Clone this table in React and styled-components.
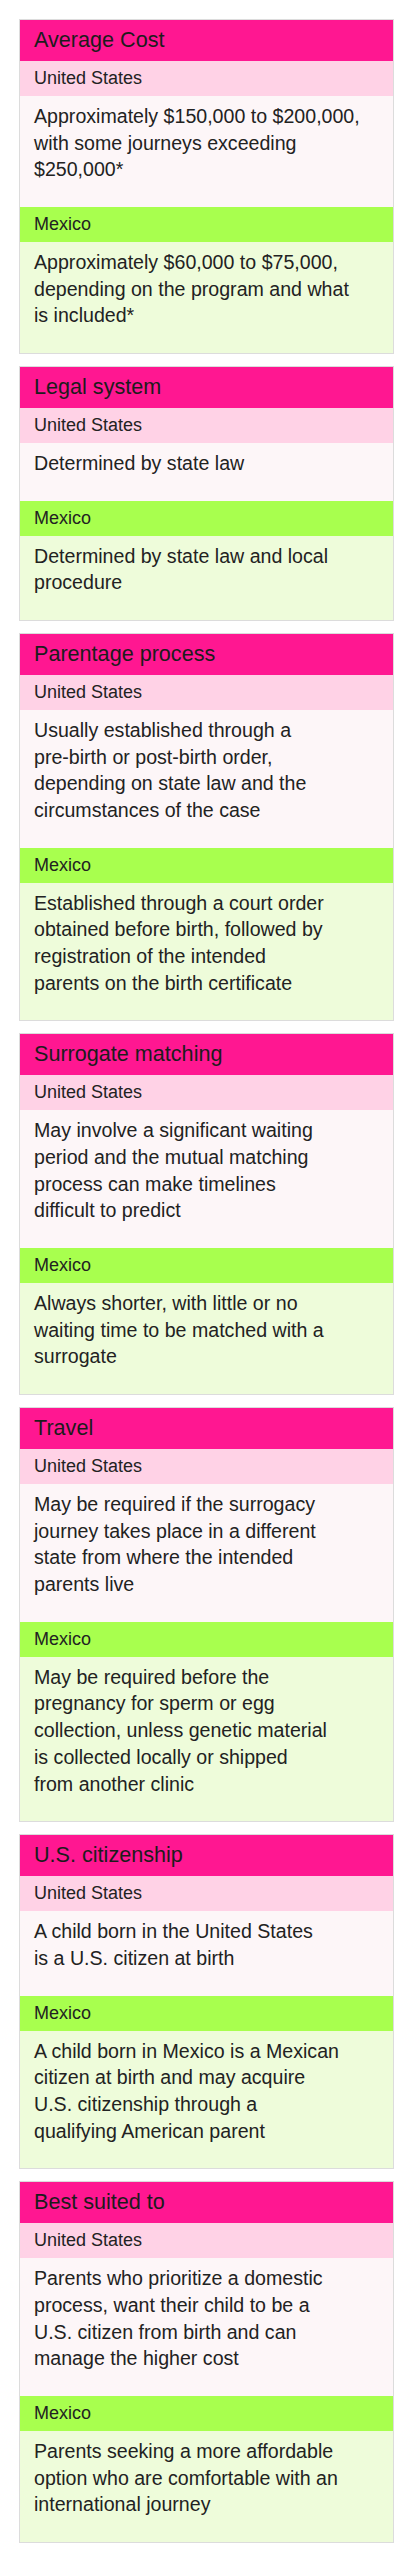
import React from "react";
import styled, { createGlobalStyle } from "styled-components";

const rows = [
  {
    title: "Average Cost",
    us: "Approximately $150,000 to $200,000,\nwith some journeys exceeding\n$250,000*",
    mx: "Approximately $60,000 to $75,000,\ndepending on the program and what\nis included*",
  },
  {
    title: "Legal system",
    us: "Determined by state law",
    mx: "Determined by state law and local\nprocedure",
  },
  {
    title: "Parentage process",
    us: "Usually established through a\npre-birth or post-birth order,\ndepending on state law and the\ncircumstances of the case",
    mx: "Established through a court order\nobtained before birth, followed by\nregistration of the intended\nparents on the birth certificate",
  },
  {
    title: "Surrogate matching",
    us: "May involve a significant waiting\nperiod and the mutual matching\nprocess can make timelines\ndifficult to predict",
    mx: "Always shorter, with little or no\nwaiting time to be matched with a\nsurrogate",
  },
  {
    title: "Travel",
    us: "May be required if the surrogacy\njourney takes place in a different\nstate from where the intended\nparents live",
    mx: "May be required before the\npregnancy for sperm or egg\ncollection, unless genetic material\nis collected locally or shipped\nfrom another clinic",
  },
  {
    title: "U.S. citizenship",
    us: "A child born in the United States\nis a U.S. citizen at birth",
    mx: "A child born in Mexico is a Mexican\ncitizen at birth and may acquire\nU.S. citizenship through a\nqualifying American parent",
  },
  {
    title: "Best suited to",
    us: "Parents who prioritize a domestic\nprocess, want their child to be a\nU.S. citizen from birth and can\nmanage the higher cost",
    mx: "Parents seeking a more affordable\noption who are comfortable with an\ninternational journey",
  },
];

export default function App() {
  return (
    <>
      <GlobalStyle />
      <Page>
        {rows.map((row) => (
          <Card key={row.title}>
            <CardTitle>{row.title}</CardTitle>
            <Country $tone="us">United States</Country>
            <Detail $tone="us">{row.us}</Detail>
            <Country $tone="mx">Mexico</Country>
            <Detail $tone="mx">{row.mx}</Detail>
          </Card>
        ))}
      </Page>
    </>
  );
}

const GlobalStyle = createGlobalStyle`
  html, body {
    margin: 0;
    padding: 0;
    background: #ffffff;
  }
  body {
    font-family: "Liberation Sans", Arial, Helvetica, sans-serif;
    color: #222222;
  }
`;

const Page = styled.main`
  display: flex;
  flex-direction: column;
  gap: 12px;
  padding: 19px 19px 19px 19px;
`;

const Card = styled.section`
  display: flex;
  flex-direction: column;
  border: 1px solid #dcdcdc;
`;

const CardTitle = styled.h2`
  margin: 0;
  padding: 7px 14px 9px;
  background-color: #ff1791;
  color: #1c1c1c;
  font-size: 21.6px;
  font-weight: 400;
  line-height: 25px;
`;

const Country = styled.h3`
  margin: 0;
  padding: 7px 14px;
  background-color: ${(p) => (p.$tone === "us" ? "#ffd2e6" : "#a8ff4e")};
  color: #222222;
  font-size: 18px;
  font-weight: 400;
  line-height: 21px;
`;

const Detail = styled.p`
  margin: 0;
  padding: 7px 20px 24px 14px;
  background-color: ${(p) => (p.$tone === "us" ? "#fdf6f8" : "#eefcda")};
  color: #222222;
  font-size: 19.6px;
  line-height: 26.67px;
  white-space: pre-line;
`;
